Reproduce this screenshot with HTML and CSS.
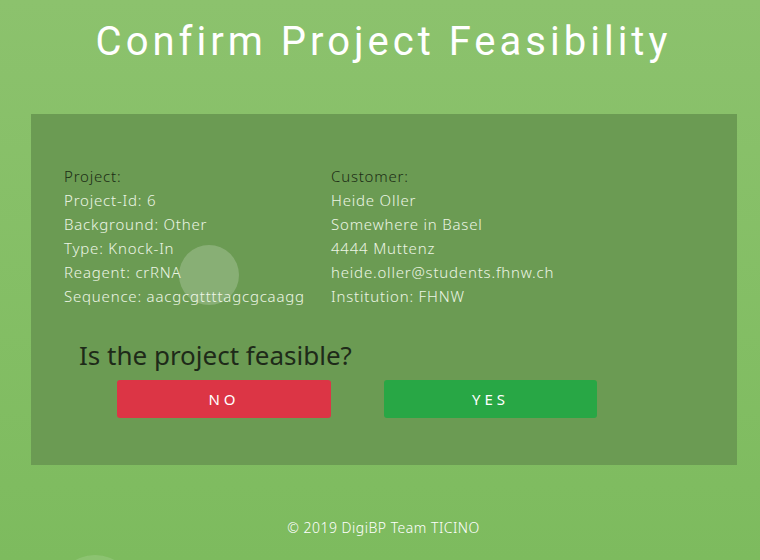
FILE: index.html
```html
<!DOCTYPE html>
<html>
<head>
<meta charset="utf-8">
<link rel="stylesheet" href="styles.css">
</head>
<body>
<div class="page">
  <h1 class="title">Confirm Project Feasibility</h1>
  <section class="card">
    <div class="info">
      <div class="col col-left">
        <div class="label">Project:</div>
        <div>Project-Id: 6</div>
        <div>Background: Other</div>
        <div>Type: Knock-In</div>
        <div>Reagent: crRNA</div>
        <div>Sequence: aacgcgttttagcgcaagg</div>
      </div>
      <div class="col">
        <div class="label">Customer:</div>
        <div>Heide Oller</div>
        <div>Somewhere in Basel</div>
        <div>4444 Muttenz</div>
        <div>heide.oller@students.fhnw.ch</div>
        <div>Institution: FHNW</div>
      </div>
    </div>
    <h2 class="question">Is the project feasible?</h2>
    <div class="actions">
      <button class="btn btn-no">NO</button>
      <button class="btn btn-yes">YES</button>
    </div>
  </section>
  <footer class="footer">© 2019 DigiBP Team TICINO</footer>
  <span class="bubble bubble-a"></span>
  <span class="bubble bubble-b"></span>
</div>
</body>
</html>
```
FILE: styles.css
```css
html, body {
  margin: 0;
  padding: 0;
}
body {
  width: 760px;
  height: 560px;
  overflow: hidden;
  background: linear-gradient(180deg, #8cc26d 0%, #7dbb5e 100%);
  font-family: "Noto Sans", "Open Sans", sans-serif;
}
.page {
  position: relative;
  height: 560px;
  overflow: hidden;
}
.title {
  margin: 0;
  padding-top: 18px;
  padding-left: 7px;
  height: 96px;
  box-sizing: border-box;
  text-align: center;
  font-family: Roboto, sans-serif;
  font-weight: 400;
  font-size: 40px;
  line-height: 48px;
  letter-spacing: 4px;
  color: #ffffff;
}
.card {
  margin: 18px 23px 0 31px;
  height: 351px;
  box-sizing: border-box;
  background: #6b9b53;
  padding: 50px 0 0 33px;
}
.info {
  display: flex;
  font-size: 15px;
  line-height: 24px;
  letter-spacing: 0.8px;
  color: #ecf5e4;
  font-weight: 300;
}
.col-left {
  width: 267px;
}
.label {
  color: #1c2d15;
}
.question {
  margin: 30px 0 0 15px;
  font-weight: 400;
  font-size: 26px;
  line-height: 34px;
  color: #1e2a19;
}
.actions {
  display: flex;
  gap: 53px;
  margin: 8px 0 0 53px;
}
.btn {
  width: 214px;
  height: 38px;
  border: 0;
  border-radius: 3px;
  font-family: "Noto Sans", sans-serif;
  font-size: 15px;
  letter-spacing: 4px;
  color: #ffffff;
  padding: 0;
}
.btn-no {
  background: #dc3545;
}
.btn-yes {
  width: 213px;
  background: #28a745;
}
.footer {
  margin-top: 53px;
  padding-left: 7px;
  text-align: center;
  font-size: 14px;
  line-height: 20px;
  letter-spacing: 0.5px;
  color: #ffffff;
  font-weight: 300;
}
.bubble {
  position: absolute;
  border-radius: 50%;
  background: rgba(255, 255, 255, 0.2);
}
.bubble-a {
  left: 179px;
  top: 245px;
  width: 60px;
  height: 60px;
}
.bubble-b {
  left: 55px;
  top: 555px;
  width: 80px;
  height: 80px;
  background: rgba(255, 255, 255, 0.12);
}
```
